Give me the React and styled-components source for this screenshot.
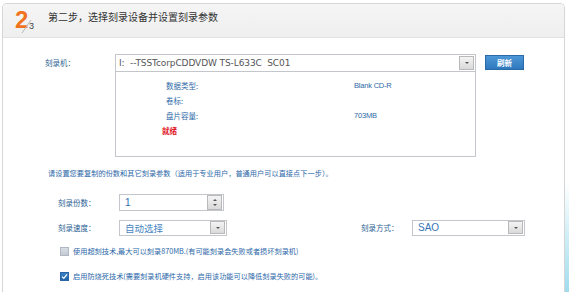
import React from "react";
import styled, { createGlobalStyle } from "styled-components";

const Global = createGlobalStyle`
  html, body { margin: 0; padding: 0; background: #fff; }
  body { font-family: "Noto Sans CJK SC", "Liberation Sans", sans-serif; }
  * { box-sizing: border-box; }
`;

const Page = styled.div`
  display: flex;
  width: 569px;
  height: 292px;
  padding: 3px 0 0 2px;
  overflow: hidden;
`;

const Panel = styled.div`
  width: 563px;
  flex: none;
  border: 1px solid #d6d6d6;
  border-bottom: none;
  border-radius: 5px 5px 0 0;
  background: #fff;
  display: flex;
  flex-direction: column;
`;

const Strip = styled.div`
  flex: 1;
  background: linear-gradient(to bottom, #fff 0%, #fff 62%, #d6f1f8 78%, #9fdcee 100%);
`;

const Header = styled.div`
  height: 34px;
  background: linear-gradient(to bottom, #f5f5f5, #efefef);
  border-bottom: 1px solid #e2e2e2;
  border-radius: 4px 4px 0 0;
  display: flex;
  align-items: flex-start;
  padding-left: 12px;
`;

const Step = styled.div`
  position: relative;
  width: 33px;
  height: 34px;
  flex: none;
`;

const StepNum = styled.span`
  position: absolute;
  left: 0;
  top: 1px;
  font-family: "Liberation Sans", Arial, sans-serif;
  font-weight: bold;
  font-size: 24px;
  color: #f0731f;
  line-height: 30px;
`;

const StepTotal = styled.span`
  position: absolute;
  left: 14px;
  top: 16px;
  font-family: "Liberation Sans", Arial, sans-serif;
  font-size: 9px;
  color: #444;
  line-height: 12px;
`;

const Slash = styled.svg`
  position: absolute;
  left: 4px;
  top: 12px;
`;

const Title = styled.div`
  font-size: 10px;
  color: #333;
  line-height: 12px;
  margin-top: 7px;
`;

const Body = styled.div`
  padding: 16px 0 0 42px;
  display: flex;
  flex-direction: column;
`;

const DeviceRow = styled.div`
  display: flex;
  align-items: flex-start;
`;

const Label = styled.div`
  width: ${(p) => p.$w}px;
  margin-left: ${(p) => p.$ml || 0}px;
  flex: none;
  font-size: 7.5px;
  line-height: ${(p) => p.$lh || 17}px;
  color: #2c5f93;
`;

const DeviceCol = styled.div`
  width: 361px;
  display: flex;
  flex-direction: column;
`;

const Select = styled.div`
  width: ${(p) => p.$w}px;
  height: ${(p) => p.$h || 17}px;
  border: 1px solid #c3c7cc;
  background: #fff;
  display: flex;
  align-items: center;
  padding-left: ${(p) => p.$pl || 5}px;
  padding-right: 1px;
  flex: none;
`;

const SelectText = styled.div`
  flex: 1;
  font-family: ${(p) => (p.$cjk ? `"Noto Sans CJK SC", sans-serif` : `"Liberation Sans", Arial, sans-serif`)};
  font-size: ${(p) => p.$fs || 10}px;
  color: ${(p) => p.$c || "#2f6fb0"};
  white-space: pre;
  line-height: 14px;
`;

const DeviceText = styled.span`
  font-family: "DejaVu Sans", sans-serif;
  font-size: 9px;
  letter-spacing: -0.1px;
  color: #555;
`;

const DropBtn = styled.div`
  width: 15px;
  height: ${(p) => p.$h || 13}px;
  border: 1px solid #b9b9b9;
  background: linear-gradient(to bottom, #f4f4f4, #d9d9d9);
  display: flex;
  align-items: center;
  justify-content: center;
  flex: none;
`;

const Tri = styled.div`
  width: 0;
  height: 0;
  border-left: 2.5px solid transparent;
  border-right: 2.5px solid transparent;
  border-top: 2.5px solid #555;
  ${(p) => p.$up && `border-top: none; border-bottom: 2.5px solid #555;`}
`;

const SpinBtn = styled.div`
  width: 15px;
  height: 15px;
  border: 1px solid #b9b9b9;
  background: linear-gradient(to bottom, #f4f4f4, #d9d9d9);
  display: flex;
  flex-direction: column;
  align-items: center;
  justify-content: space-evenly;
  flex: none;
`;

const InfoBox = styled.div`
  border: 1px solid #c3c7cc;
  border-top: none;
  height: 85px;
  padding: 6px 0 0 46px;
  display: grid;
  grid-template-columns: 192px auto;
  grid-auto-rows: 15px;
  align-items: center;
`;

const InfoLabel = styled.div`
  font-size: 7.5px;
  color: ${(p) => (p.$red ? "#e0141e" : "#2f6aa8")};
  font-weight: ${(p) => (p.$red ? "bold" : "normal")};
  padding-left: ${(p) => (p.$red ? 0 : 4)}px;
  line-height: 10px;
`;

const InfoValue = styled.div`
  font-family: "Liberation Sans", Arial, sans-serif;
  font-size: 7.5px;
  letter-spacing: -0.2px;
  color: #2f6aa8;
  line-height: 10px;
`;

const RefreshBtn = styled.div`
  margin-left: 9px;
  margin-top: 1px;
  width: 39px;
  height: 15px;
  background: linear-gradient(to bottom, #4c97d6, #2f78bd);
  border: 1px solid #2a6aa8;
  color: #fff;
  font-size: 7.5px;
  font-weight: bold;
  display: flex;
  align-items: center;
  justify-content: center;
`;

const Note = styled.div`
  margin: 11px 0 0 3px;
  font-size: 7.2px;
  line-height: 10px;
  color: #2b67a8;
  letter-spacing: 0.02px;
`;

const FormRow = styled.div`
  display: flex;
  align-items: center;
  margin-top: ${(p) => p.$mt}px;
`;

const CheckRow = styled.label`
  display: flex;
  align-items: center;
  margin: ${(p) => p.$mt}px 0 0 15px;
  height: 12px;
`;

const Box = styled.span`
  width: 9px;
  height: 9px;
  flex: none;
  margin-right: 4px;
  border: 1px solid ${(p) => (p.$on ? "#2a65a5" : "#aeb7c2")};
  background: ${(p) => (p.$on ? "linear-gradient(#3a80c4, #2264a8)" : "linear-gradient(#d9dee4, #c3cad3)")};
  display: flex;
  align-items: center;
  justify-content: center;
`;

const CheckText = styled.span`
  font-size: 7.2px;
  color: #2b67a8;
  line-height: 10px;
`;

export default function App() {
  return (
    <>
      <Global />
      <Page>
        <Panel>
          <Header>
            <Step>
              <StepNum>2</StepNum>
              <Slash width="14" height="18" viewBox="0 0 14 18">
                <line x1="3" y1="17" x2="12" y2="4" stroke="#b8b8b8" strokeWidth="1" />
              </Slash>
              <StepTotal>3</StepTotal>
            </Step>
            <Title>第二步，选择刻录设备并设置刻录参数</Title>
          </Header>
          <Body>
            <DeviceRow>
              <Label $w={70} $lh={18}>刻录机：</Label>
              <DeviceCol>
                <Select $w={361} $h={18} $pl={3}>
                  <SelectText>
                    <DeviceText>I:  --TSSTcorpCDDVDW TS-L633C  SC01</DeviceText>
                  </SelectText>
                  <DropBtn $h={14}><Tri /></DropBtn>
                </Select>
                <InfoBox>
                  <InfoLabel>数据类型:</InfoLabel>
                  <InfoValue>Blank CD-R</InfoValue>
                  <InfoLabel>卷标:</InfoLabel>
                  <InfoValue></InfoValue>
                  <InfoLabel>盘片容量:</InfoLabel>
                  <InfoValue>703MB</InfoValue>
                  <InfoLabel $red>就绪</InfoLabel>
                  <InfoValue></InfoValue>
                </InfoBox>
              </DeviceCol>
              <RefreshBtn>刷新</RefreshBtn>
            </DeviceRow>
            <Note>请设置您要复制的份数和其它刻录参数（适用于专业用户，普通用户可以直接点下一步）。</Note>
            <FormRow $mt={16}>
              <Label $w={61} $ml={13}>刻录份数：</Label>
              <Select $w={105} $h={17}>
                <SelectText $fs={10}>1</SelectText>
                <SpinBtn><Tri $up /><Tri /></SpinBtn>
              </Select>
            </FormRow>
            <FormRow $mt={8}>
              <Label $w={61} $ml={13}>刻录速度：</Label>
              <Select $w={108} $h={16}>
                <SelectText $cjk $fs={9.5} $c="#4583c0">自动选择</SelectText>
                <DropBtn><Tri /></DropBtn>
              </Select>
              <Label $w={51} $ml={134}>刻录方式：</Label>
              <Select $w={113} $h={16}>
                <SelectText $fs={10} $c="#3876b6">SAO</SelectText>
                <DropBtn><Tri /></DropBtn>
              </Select>
            </FormRow>
            <CheckRow $mt={9}>
              <Box />
              <CheckText>使用超刻技术,最大可以刻录870MB.(有可能刻录会失败或者损坏刻录机)</CheckText>
            </CheckRow>
            <CheckRow $mt={13}>
              <Box $on>
                <svg width="7" height="7" viewBox="0 0 7 7">
                  <path d="M1 3.6 L2.8 5.4 L6 1.4" stroke="#fff" strokeWidth="1.3" fill="none" />
                </svg>
              </Box>
              <CheckText>启用防烧死技术(需要刻录机硬件支持，启用该功能可以降低刻录失败的可能)。</CheckText>
            </CheckRow>
          </Body>
        </Panel>
        <Strip />
      </Page>
    </>
  );
}
